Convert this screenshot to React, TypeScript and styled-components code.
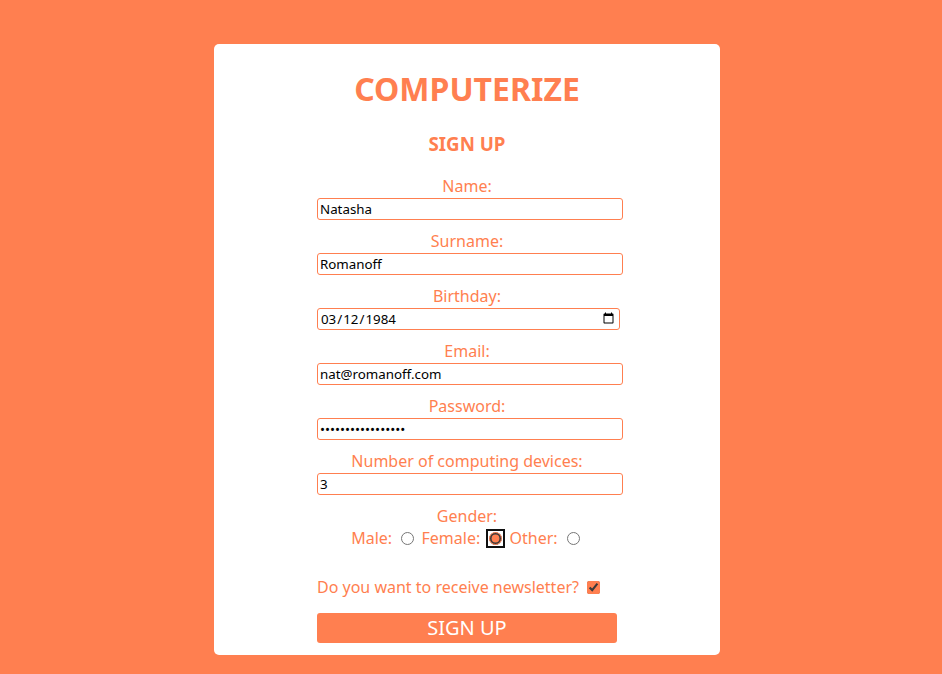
import * as React from "react";
import styled, { createGlobalStyle } from "styled-components";

const CORAL = "#ff7f50";

const GlobalStyle = createGlobalStyle`
  html, body {
    margin: 0;
    background: ${CORAL};
    font-family: "Noto Sans", "Open Sans", sans-serif;
  }
`;

const Page = styled.div`
  display: flex;
  justify-content: center;
  padding: 44px 8px 19px 0;
`;

const Card = styled.div`
  width: 506px;
  box-sizing: border-box;
  background: #fff;
  border-radius: 5px;
  padding: 23px 0 12px;
  color: ${CORAL};
  text-align: center;
`;

const Title = styled.h1`
  margin: 0;
  font-size: 32px;
  font-weight: 700;
  line-height: 1.362;
`;

const Subtitle = styled.h3`
  margin: 20px 0 0;
  font-size: 18.72px;
  font-weight: 700;
  line-height: 1.362;
`;

const Form = styled.form`
  width: 306px;
  margin: 19px auto 0;
  padding-left: 6px;
  display: flex;
  flex-direction: column;
  align-items: stretch;
`;

const Field = styled.div`
  display: flex;
  flex-direction: column;
  align-items: flex-start;
  & + & {
    margin-top: 10px;
  }
`;

const Label = styled.label`
  align-self: stretch;
  margin-left: -6px;
  font-size: 16px;
  line-height: 22px;
  height: 22px;
  text-align: center;
`;

const Input = styled.input`
  box-sizing: border-box;
  width: ${(p) => (p.type === "date" ? 303 : 306)}px;
  height: 22px;
  margin: 1px 0 0;
  padding: 1px 2px;
  border: 1px solid ${CORAL};
  border-radius: 3px;
  font-family: "Noto Sans", "Open Sans", sans-serif;
  font-size: 13.33px;
  color: #000;
  background: #fff;
  outline: none;
`;

const RadioRow = styled.div`
  align-self: stretch;
  margin-left: -6px;
  font-size: 16px;
  line-height: 22px;
  text-align: center;
  white-space: nowrap;
`;

const Radio = styled.input<{ $focused?: boolean }>`
  width: 13px;
  height: 13px;
  margin: 3px 3px 0 5px;
  vertical-align: -1px;
  accent-color: ${CORAL};
  outline: ${(p) => (p.$focused ? "2px solid #101010" : "none")};
  outline-offset: 1px;
  border-radius: 3px;
`;

const Newsletter = styled.div`
  margin-top: 27px;
  font-size: 16px;
  line-height: 22px;
  text-align: left;
`;

const Checkbox = styled.input`
  width: 13px;
  height: 13px;
  margin: 3px 3px 3px 4px;
  vertical-align: -1px;
  accent-color: ${CORAL};
`;

const SubmitButton = styled.button`
  width: 300px;
  height: 30px;
  margin-top: 15px;
  border: none;
  border-radius: 3px;
  background: ${CORAL};
  color: #fff;
  font-family: "Noto Sans", "Open Sans", sans-serif;
  font-size: 20px;
  line-height: 30px;
  padding: 0;
  cursor: pointer;
`;

const fields = [
  { id: "name", label: "Name:", type: "text", value: "Natasha" },
  { id: "surname", label: "Surname:", type: "text", value: "Romanoff" },
  { id: "birthday", label: "Birthday:", type: "date", value: "1984-03-12" },
  { id: "email", label: "Email:", type: "email", value: "nat@romanoff.com" },
  { id: "password", label: "Password:", type: "password", value: "natasharomanoff84" },
  { id: "devices", label: "Number of computing devices:", type: "text", value: "3" },
];

export default function App() {
  return (
    <>
      <GlobalStyle />
      <Page>
        <Card>
          <Title>COMPUTERIZE</Title>
          <Subtitle>SIGN UP</Subtitle>
          <Form onSubmit={(e) => e.preventDefault()}>
            {fields.map((f) => (
              <Field key={f.id}>
                <Label htmlFor={f.id}>{f.label}</Label>
                <Input id={f.id} type={f.type} defaultValue={f.value} />
              </Field>
            ))}
            <Field>
              <Label>Gender:</Label>
              <RadioRow>
                Male: <Radio type="radio" name="gender" value="male" />{" "}
                Female: <Radio type="radio" name="gender" value="female" defaultChecked $focused />{" "}
                Other: <Radio type="radio" name="gender" value="other" />
              </RadioRow>
            </Field>
            <Newsletter>
              Do you want to receive newsletter? <Checkbox type="checkbox" defaultChecked />
            </Newsletter>
            <SubmitButton type="submit">SIGN UP</SubmitButton>
          </Form>
        </Card>
      </Page>
    </>
  );
}
